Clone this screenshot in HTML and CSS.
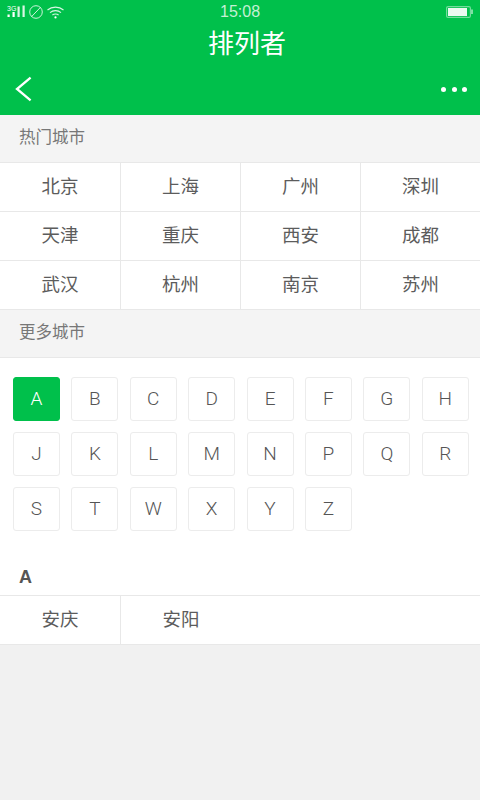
FILE: index.html
```html
<!DOCTYPE html>
<html lang="zh-CN">
<head>
    <meta charset="UTF-8">
    <meta name="viewport" content="width=device-width, initial-scale=1.0">
    <title>排列者</title>
    <link rel="stylesheet" href="styles.css">
</head>
<body>

    <header class="top-bar">
        <div class="status-bar">
            <div class="status-icons">
                <svg width="19" height="14" viewBox="0 0 19 14" class="signal">
                    <text x="0" y="6" class="signal-label">3G</text>
                    <rect x="0.5" y="9.5" width="2.2" height="2.5" fill="#fff"/>
                    <rect x="5.5" y="7" width="2.2" height="5" fill="#fff"/>
                    <rect x="10.5" y="1.5" width="2.2" height="10.5" fill="#fff" opacity=".85"/>
                    <rect x="15.5" y="0.5" width="2.2" height="11.5" fill="#fff" opacity=".85"/>
                </svg>
                <svg width="14" height="14" viewBox="0 0 14 14" fill="none" stroke="#fff" stroke-opacity=".8" stroke-width="1">
                    <circle cx="7" cy="7" r="6.3"/>
                    <path d="M2.6 11.6 11.4 2.4"/>
                </svg>
                <svg width="17" height="13" viewBox="0 0 17 13" fill="none" stroke="#fff" stroke-opacity=".85" stroke-width="1.1" class="wifi">
                    <path d="M.5 4C5 .2 12 .2 16.5 4"/>
                    <path d="M3 6.6C6 4 11 4 14 6.6"/>
                    <path d="M5.4 9C7 7.7 10 7.7 11.6 9"/>
                    <circle cx="8.5" cy="11.4" r="1.1" fill="#fff" stroke="none"/>
                </svg>
            </div>
            <span class="clock">15:08</span>
            <svg width="27" height="12" viewBox="0 0 27 12" class="battery">
                <rect x=".6" y=".6" width="23.8" height="10.8" rx="1.5" fill="none" stroke="#fff" stroke-opacity=".45" stroke-width="1.2"/>
                <rect x="2" y="2" width="19" height="8" fill="#fff" opacity=".92"/>
                <rect x="25" y="3.5" width="2" height="4.5" fill="#fff" opacity=".5"/>
            </svg>
        </div>
        <h1 class="page-title">排列者</h1>
        <div class="nav-row">
            <svg width="18" height="26" viewBox="0 0 18 26" fill="none" stroke="#fff" stroke-width="2.3">
                <path d="M15.6 1.6 2 13 15.6 24.4"/>
            </svg>
            <div class="more-dots">
                <span></span><span></span><span></span>
            </div>
        </div>
    </header>

    <div class="section-title">热门城市</div>
    <div class="city-grid">
        <div class="city">北京</div>
        <div class="city">上海</div>
        <div class="city">广州</div>
        <div class="city">深圳</div>
        <div class="city">天津</div>
        <div class="city">重庆</div>
        <div class="city">西安</div>
        <div class="city">成都</div>
        <div class="city">武汉</div>
        <div class="city">杭州</div>
        <div class="city">南京</div>
        <div class="city">苏州</div>
    </div>

    <div class="section-title">更多城市</div>
    <div class="letters-panel">
        <div class="letter-grid">
            <div class="letter active">A</div>
            <div class="letter">B</div>
            <div class="letter">C</div>
            <div class="letter">D</div>
            <div class="letter">E</div>
            <div class="letter">F</div>
            <div class="letter">G</div>
            <div class="letter">H</div>
            <div class="letter">J</div>
            <div class="letter">K</div>
            <div class="letter">L</div>
            <div class="letter">M</div>
            <div class="letter">N</div>
            <div class="letter">P</div>
            <div class="letter">Q</div>
            <div class="letter">R</div>
            <div class="letter">S</div>
            <div class="letter">T</div>
            <div class="letter">W</div>
            <div class="letter">X</div>
            <div class="letter">Y</div>
            <div class="letter">Z</div>
        </div>
        <h2 class="group-letter">A</h2>
    </div>
    <div class="city-row">
        <div class="city">安庆</div>
        <div class="city">安阳</div>
    </div>

</body>
</html>
```

FILE: styles.css
```css
* {
    box-sizing: border-box;
    font-family: "Liberation Sans", "Noto Sans CJK SC", sans-serif;
}
html, body { height: 100%; }
body {
    margin: 0;
    background: #f1f1f1;
    color: #555;
    overflow: hidden;
}

.top-bar {
    height: 115px;
    background: #00c04b;
    color: #fff;
    display: flex;
    flex-direction: column;
}
.status-bar {
    height: 24px;
    padding: 0 7px;
    display: flex;
    align-items: center;
}
.status-icons { display: flex; align-items: center; gap: 3px; width: 213px; }
.signal-label { font-size: 7px; fill: #fff; }
.wifi { margin-left: 1px; }
.clock {
    font-size: 16px;
    line-height: 18px;
    color: #c4f0d4;
}
.battery { margin-left: auto; }
.page-title {
    margin: 0;
    font-size: 26px;
    line-height: 32px;
    font-weight: 400;
    text-align: center;
    padding: 4px 0 0 14px;
}
.nav-row {
    display: flex;
    justify-content: space-between;
    align-items: center;
    padding: 16px 13px 0 15px;
}
.more-dots { display: flex; gap: 5.5px; }
.more-dots span {
    width: 5px;
    height: 5px;
    border-radius: 50%;
    background: #fff;
}

.section-title {
    height: 47px;
    padding-left: 19px;
    background: #f4f4f4;
    font-size: 16.5px;
    line-height: 44px;
    color: #777;
}

.city-grid {
    display: grid;
    grid-template-columns: 121px 120px 120px 119px;
    grid-auto-rows: 49px;
    background: #fff;
    border-top: 1px solid #e8e8e8;
}
.city {
    font-size: 18.5px;
    line-height: 47px;
    text-align: center;
    color: #5c5c5c;
    border-right: 1px solid #e8e8e8;
    border-bottom: 1px solid #e8e8e8;
}
.city:nth-child(4n) { border-right: none; }

.city-row {
    display: flex;
    height: 50px;
    background: #fff;
    border-top: 1px solid #e8e8e8;
    border-bottom: 1px solid #e8e8e8;
}
.city-row .city { width: 121px; border-bottom: none; }
.city-row .city:last-child { width: 120px; border-right: none; }

.letters-panel {
    background: #fff;
    border-top: 1px solid #e8e8e8;
    height: 238px;
    padding: 19px 13px 0;
}
.letter-grid {
    display: grid;
    grid-template-columns: repeat(8, 47px);
    grid-auto-rows: 44px;
    column-gap: 11.4px;
    row-gap: 11px;
}
.letter {
    border: 1px solid #ececec;
    border-radius: 3px;
    font-family: Roboto, sans-serif;
    font-size: 19px;
    font-weight: 300;
    line-height: 42px;
    text-align: center;
    color: #555;
}
.letter.active {
    background: #00c04b;
    border-color: #00c04b;
    color: #fff;
}
.group-letter {
    margin: 34px 0 0 6px;
    font-size: 18px;
    line-height: 24px;
    font-weight: 700;
    color: #555;
}
```
